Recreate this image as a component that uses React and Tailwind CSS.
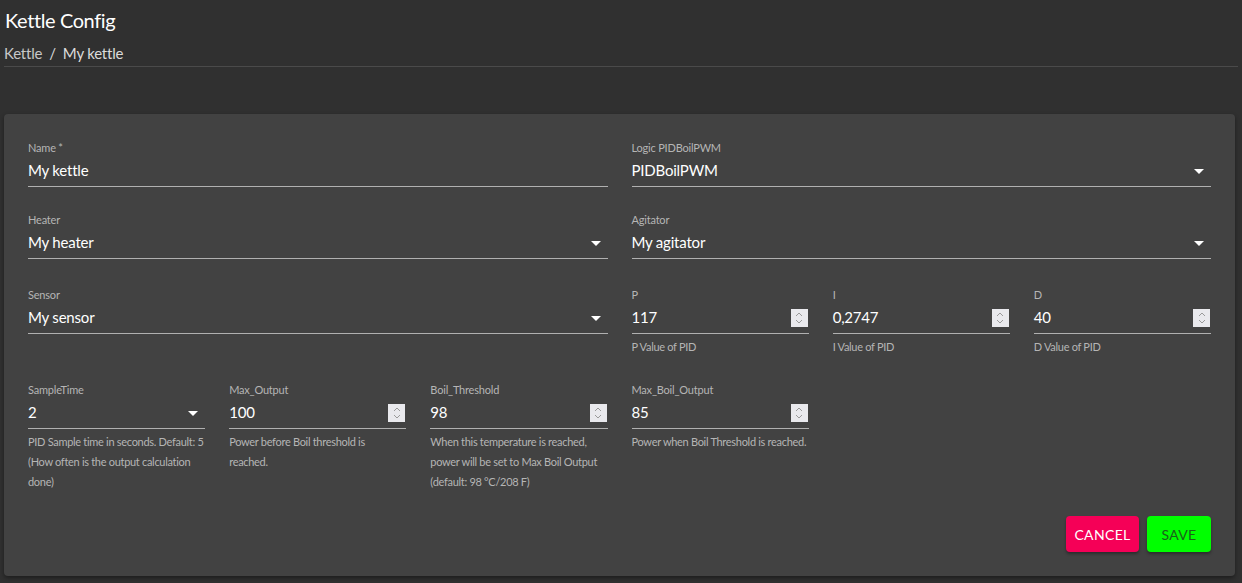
const FONT = { fontFamily: 'Lato, Roboto, "Liberation Sans", sans-serif' };

function Arrow() {
  return (
    <svg width="24" height="24" viewBox="0 0 24 24" className="shrink-0">
      <path d="M7 10l5 5 5-5z" fill="#ffffff" />
    </svg>
  );
}

function Spinner() {
  return (
    <div className="w-[17px] h-[18px] bg-[#e9e9ed] flex flex-col items-center justify-center gap-[2px] mr-[1px]">
      <svg width="8" height="5" viewBox="0 0 8 5"><path d="M1 4l3-3 3 3" stroke="#9a9a9a" fill="none" strokeWidth="1" /></svg>
      <svg width="8" height="5" viewBox="0 0 8 5"><path d="M1 1l3 3 3-3" stroke="#9a9a9a" fill="none" strokeWidth="1" /></svg>
    </div>
  );
}

function Field({ label, value, kind, helper, className = "" }) {
  return (
    <div className={`flex flex-col ${className}`}>
      <div className="h-4 text-[11px] leading-4 text-[#b5b5b5] tracking-[-0.2px]">{label}</div>
      <div className="h-[31px] flex items-center justify-between border-b border-[#b0b0b0]">
        <span className="text-[15px] text-white pb-[1px] tracking-[-0.2px]">{value}</span>
        {kind === "select" && <Arrow />}
        {kind === "number" && <Spinner />}
      </div>
      {helper && (
        <div className="mt-[3px] text-[11px] leading-5 text-[#b5b5b5] tracking-[-0.3px]">
          {helper.map((line) => (
            <div key={line} className="whitespace-nowrap">{line}</div>
          ))}
        </div>
      )}
    </div>
  );
}

export default function App() {
  return (
    <div className="min-h-[583px] bg-[#303030] text-white" style={FONT}>
      <div className="px-[4px]">
        <div className="h-[40px] flex items-center pl-[1px] text-[20px] tracking-[-0.4px]">Kettle Config</div>
        <div className="h-[27px] flex items-end pb-[2px] text-[15px] tracking-[-0.2px] border-b border-[#4a4a4a]">
          <span className="text-[#c8c8c8]">Kettle</span>
          <span className="mx-[7px] text-[#d8d8d8]">/</span>
          <span className="text-[#dcdcdc]">My kettle</span>
        </div>
      </div>

      <div className="mt-[47px] ml-[4px] w-[1231px] rounded bg-[#424242] shadow-[0_2px_4px_rgba(0,0,0,0.4)] px-6 pt-[26px] pb-[24px]">
        <div className="grid grid-cols-6 gap-x-6">
          <Field className="col-span-3" label="Name *" value="My kettle" />
          <Field className="col-span-3" label="Logic PIDBoilPWM" value="PIDBoilPWM" kind="select" />

          <Field className="col-span-3 mt-[25px]" label="Heater" value="My heater" kind="select" />
          <Field className="col-span-3 mt-[25px]" label="Agitator" value="My agitator" kind="select" />

          <Field className="col-span-3 mt-[28px]" label="Sensor" value="My sensor" kind="select" />
          <Field className="mt-[28px]" label="P" value="117" kind="number" helper={["P Value of PID"]} />
          <Field className="mt-[28px]" label="I" value="0,2747" kind="number" helper={["I Value of PID"]} />
          <Field className="mt-[28px]" label="D" value="40" kind="number" helper={["D Value of PID"]} />

          <Field
            className="mt-[25px]"
            label="SampleTime"
            value="2"
            kind="select"
            helper={["PID Sample time in seconds. Default: 5", "(How often is the output calculation", "done)"]}
          />
          <Field
            className="mt-[25px]"
            label="Max_Output"
            value="100"
            kind="number"
            helper={["Power before Boil threshold is", "reached."]}
          />
          <Field
            className="mt-[25px]"
            label="Boil_Threshold"
            value="98"
            kind="number"
            helper={["When this temperature is reached,", "power will be set to Max Boil Output", "(default: 98 °C/208 F)"]}
          />
          <Field
            className="mt-[25px]"
            label="Max_Boil_Output"
            value="85"
            kind="number"
            helper={["Power when Boil Threshold is reached."]}
          />
        </div>

        <div className="mt-[24px] flex justify-end gap-[8px]">
          <button className="h-9 w-[73px] rounded bg-[#f50057] text-white text-[14px] tracking-wide shadow-[0_2px_3px_rgba(0,0,0,0.35)]">
            CANCEL
          </button>
          <button className="h-9 w-[64px] rounded bg-[#00ff00] text-[#1b5e1b] text-[14px] tracking-wide shadow-[0_2px_3px_rgba(0,0,0,0.35)]">
            SAVE
          </button>
        </div>
      </div>
    </div>
  );
}
